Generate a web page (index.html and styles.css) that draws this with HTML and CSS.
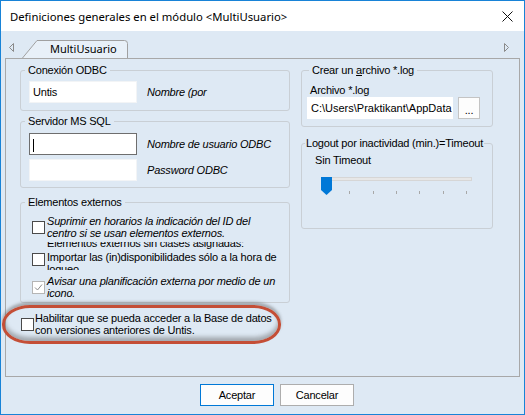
FILE: index.html
```html
<!DOCTYPE html>
<html lang="es">
<head>
    <meta charset="UTF-8">
    <title>Definiciones generales en el módulo &lt;MultiUsuario&gt;</title>
    <link rel="stylesheet" href="styles.css">
</head>
<body>
    <div class="ventana">
        <!-- Barra de título -->
        <div class="barra-titulo">
            <span>Definiciones generales en el módulo &lt;MultiUsuario&gt;</span>
            <svg class="cerrar" width="11" height="11" viewBox="0 0 11 11">
                <path d="M0.5 0.5 L10.5 10.5 M10.5 0.5 L0.5 10.5" stroke="#111" stroke-width="1" fill="none"/>
            </svg>
        </div>

        <!-- Pestañas -->
        <div class="pestanas">
            <svg class="flecha" width="5" height="9" viewBox="0 0 5 9">
                <path d="M4.5 0.5 L0.5 4.5 L4.5 8.5 Z" fill="none" stroke="#8a8a8a"/>
            </svg>
            <div class="pestana">
                <svg class="pestana-forma" width="106" height="18" viewBox="0 0 106 18">
                    <path d="M0.5 18 L15 0.5 H102.5 Q105.5 0.5 105.5 3.5 V18" fill="#e8f0f8" stroke="#a0a0a0"/>
                </svg>
                <span class="pestana-texto">MultiUsuario</span>
            </div>
            <svg class="flecha flecha-der" width="5" height="9" viewBox="0 0 5 9">
                <path d="M0.5 0.5 L4.5 4.5 L0.5 8.5 Z" fill="none" stroke="#8a8a8a"/>
            </svg>
        </div>

        <!-- Contenido de la pestaña -->
        <div class="panel">
            <div class="columna col-izq">
                <fieldset class="grupo conexion">
                    <legend>Conexión ODBC</legend>
                    <div class="fila-campo">
                        <div class="campo">Untis</div>
                        <span class="cursiva">Nombre (por</span>
                    </div>
                </fieldset>

                <fieldset class="grupo servidor">
                    <legend>Servidor MS SQL</legend>
                    <div class="fila-campo">
                        <div class="campo activo"><span class="cursor"></span></div>
                        <span class="cursiva">Nombre de usuario ODBC</span>
                    </div>
                    <div class="fila-campo">
                        <div class="campo"></div>
                        <span class="cursiva">Password ODBC</span>
                    </div>
                </fieldset>

                <fieldset class="grupo externos">
                    <legend>Elementos externos</legend>
                    <div class="opcion">
                        <span class="casilla"></span>
                        <span class="cursiva">Suprimir en horarios la indicación del ID del<br>centro si se usan elementos externos.</span>
                    </div>
                    <div class="recortado">
                        <span>Elementos externos sin clases asignadas:</span>
                    </div>
                    <div class="opcion importar">
                        <span class="casilla"></span>
                        <span>Importar las (in)disponibilidades sólo a la hora de<br>logueo</span>
                    </div>
                    <div class="opcion">
                        <span class="casilla marcada">
                            <svg width="9" height="9" viewBox="0 0 9 9">
                                <path d="M1 4.5 L3.5 7 L8 1.5" fill="none" stroke="#8c8c8c" stroke-width="1"/>
                            </svg>
                        </span>
                        <span class="cursiva">Avisar una planificación externa por medio de un<br>icono.</span>
                    </div>
                </fieldset>

                <div class="opcion habilitar">
                    <span class="casilla"></span>
                    <span>Habilitar que se pueda acceder a la Base de datos<br>con versiones anteriores de Untis.</span>
                </div>
            </div>

            <div class="columna col-der">
                <fieldset class="grupo archivo">
                    <legend>Crear un <u>a</u>rchivo *.log</legend>
                    <div class="rotulo">Archivo *.log</div>
                    <div class="fila-archivo">
                        <div class="campo ruta">C:\Users\Praktikant\AppData</div>
                        <div class="boton-puntos">...</div>
                    </div>
                </fieldset>

                <fieldset class="grupo logout">
                    <legend>Logout por inactividad (min.)=Timeout</legend>
                    <div class="rotulo sin-timeout">Sin Timeout</div>
                    <div class="deslizador">
                        <div class="pista"></div>
                        <div class="marcas">
                            <span></span><span></span><span></span><span></span><span></span><span></span><span></span>
                        </div>
                        <svg class="tirador" width="11" height="18" viewBox="0 0 11 18">
                            <path d="M0 0 H11 V13 L5.5 18 L0 13 Z" fill="#0078d7"/>
                        </svg>
                    </div>
                </fieldset>
            </div>

            <!-- Marca roja de anotación -->
            <div class="marca"></div>
        </div>

        <!-- Botones -->
        <div class="botones">
            <button class="boton principal">Aceptar</button>
            <button class="boton">Cancelar</button>
        </div>
    </div>
</body>
</html>
```

FILE: styles.css
```css
body {
    margin: 0;
    font-family: "Liberation Sans", Arial, sans-serif;
    font-size: 11px;
    letter-spacing: -0.2px;
    color: #000;
}
.ventana {
    width: 525px;
    height: 415px;
    box-sizing: border-box;
    border: 1px solid #1883d7;
    background-color: #dee9f4;
    display: flex;
    flex-direction: column;
}
.barra-titulo {
    height: 30px;
    flex: none;
    background-color: #fff;
    display: flex;
    align-items: center;
    padding: 0 11px 0 9px;
    font-family: "Noto Sans", sans-serif;
    font-size: 11.3px;
    letter-spacing: 0;
}
.cerrar {
    margin-left: auto;
}
.pestanas {
    height: 27px;
    flex: none;
    display: flex;
    align-items: flex-end;
    padding: 0 15px 0 8px;
}
.flecha {
    margin-bottom: 6px;
}
.flecha-der {
    margin-left: auto;
}
.pestana {
    position: relative;
    width: 106px;
    height: 18px;
    margin-left: 8px;
}
.pestana-forma {
    position: absolute;
    left: 0;
    top: 0;
}
.pestana-texto {
    position: relative;
    display: block;
    padding-left: 28px;
    line-height: 18px;
    font-family: "Noto Sans", sans-serif;
    font-size: 11px;
    letter-spacing: 0;
}
.panel {
    flex: 1;
    position: relative;
    margin: 0 4px;
    border: 1px solid #a8a8a8;
    padding: 5px 0 0 14px;
    display: flex;
    align-items: flex-start;
    gap: 11px;
}
.columna {
    display: flex;
    flex-direction: column;
}
.col-izq {
    width: 270px;
}
.col-der {
    width: 192px;
}
.grupo {
    margin: 0;
    min-width: 0;
    border: 1px solid #c9cfd5;
    border-radius: 3px;
    padding: 4px 8px 7px;
}
.grupo legend {
    padding: 0 3px;
    margin-left: -4px;
    line-height: 13px;
    white-space: nowrap;
}
.servidor {
    margin-top: 4px;
    padding: 5px 8px 6px;
}
.externos {
    margin-top: 8px;
    padding: 6px 8px 3px 11px;
}
.externos legend {
    margin-left: -7px;
}
.fila-campo {
    display: flex;
    align-items: center;
    gap: 10px;
}
.fila-campo + .fila-campo {
    margin-top: 4px;
}
.campo {
    width: 108px;
    height: 22px;
    box-sizing: border-box;
    border: 1px solid #f2f4f6;
    background-color: #fff;
    padding: 0 3px;
    line-height: 20px;
    overflow: hidden;
    white-space: nowrap;
    flex: none;
}
.campo.activo {
    border-color: #6e6e6e;
}
.cursor {
    display: inline-block;
    width: 1px;
    height: 13px;
    background-color: #000;
    vertical-align: middle;
}
.cursiva {
    font-style: italic;
}
.opcion {
    display: flex;
    align-items: center;
    gap: 2px;
    line-height: 12px;
    white-space: nowrap;
}
.casilla {
    width: 13px;
    height: 13px;
    box-sizing: border-box;
    border: 1px solid #4a4a4a;
    background-color: #fff;
    flex: none;
    display: flex;
    align-items: center;
    justify-content: center;
}
.casilla.marcada {
    border-color: #b5b5b5;
}
.recortado {
    height: 8px;
    margin-top: 3px;
    overflow: hidden;
    padding-left: 15px;
    line-height: 12px;
    white-space: nowrap;
}
.recortado span {
    display: block;
    margin-top: -5px;
}
.importar {
    height: 19px;
    margin-top: 1px;
    overflow: hidden;
    align-items: flex-start;
}
.importar .casilla {
    margin-top: 2px;
}
.importar + .opcion {
    margin-top: 5px;
}
.habilitar {
    margin: 9px 0 0 1px;
    gap: 1px;
}
.archivo {
    padding: 7px 5px 7px;
}
.archivo legend {
    margin-left: 2px;
}
.rotulo {
    line-height: 13px;
    padding-left: 3px;
}
.fila-archivo {
    display: flex;
    gap: 5px;
}
.campo.ruta {
    width: 146px;
    border-color: #fff;
    letter-spacing: 0;
}
.boton-puntos {
    width: 22px;
    height: 22px;
    box-sizing: border-box;
    border: 1px solid #c4c4c4;
    background-color: #fdfdfd;
    text-align: center;
    line-height: 24px;
}
.logout {
    margin-top: 10px;
    padding: 4px 5px 27px;
}
.logout legend {
    margin-left: -2px;
    padding: 0 1px;
}
.sin-timeout {
    padding-left: 8px;
}
.deslizador {
    position: relative;
    width: 151px;
    height: 24px;
    margin: 10px 0 0 14px;
}
.pista {
    margin-top: 6px;
    height: 4px;
    box-sizing: border-box;
    border: 1px solid #d6d6d6;
    background-color: #e7e7e7;
}
.marcas {
    display: flex;
    justify-content: space-between;
    margin: 10px 5px 0 5px;
}
.marcas span {
    width: 1px;
    height: 3px;
    background-color: #a8a8a8;
}
.tirador {
    position: absolute;
    left: 0;
    top: 0;
}
.marca {
    position: absolute;
    left: -4px;
    top: 246px;
    width: 279px;
    height: 39px;
    box-sizing: border-box;
    border: 3px solid #c44e36;
    border-radius: 28px / 19px;
    box-shadow: 0 -3px 3px rgba(90, 90, 90, 0.45), inset 0 -4px 4px rgba(90, 90, 90, 0.45);
    pointer-events: none;
}
.botones {
    height: 37px;
    flex: none;
    box-sizing: border-box;
    padding: 7px 0 0 199px;
    display: flex;
    align-items: flex-start;
    gap: 6px;
}
.boton {
    width: 74px;
    height: 22px;
    border: 1px solid #adadad;
    background-color: #fdfdfd;
    font-family: "Liberation Sans", Arial, sans-serif;
    font-size: 11px;
    letter-spacing: -0.2px;
    color: #000;
    padding: 0;
}
.boton.principal {
    border-color: #0078d7;
}
```
